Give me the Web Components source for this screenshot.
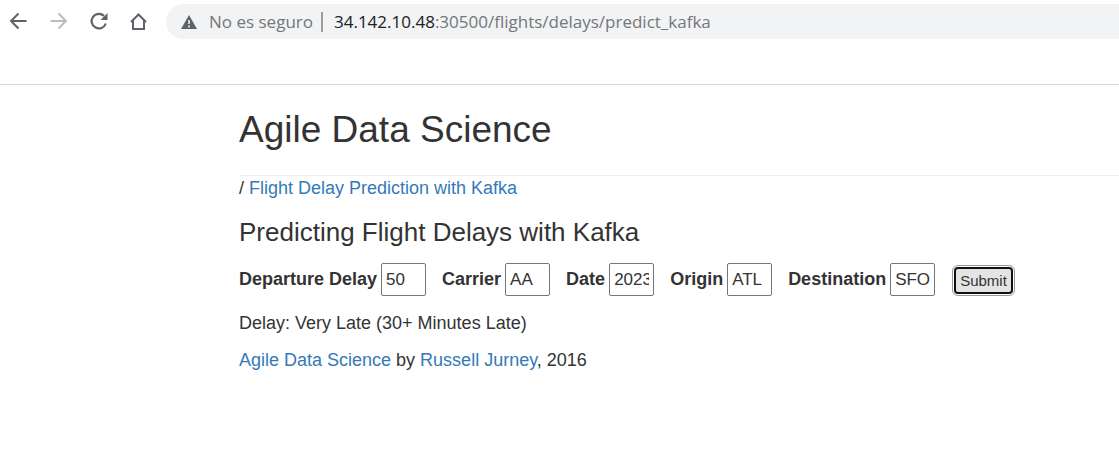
<!DOCTYPE html>
<html lang="en">
<head>
<meta charset="utf-8">
<title>Flight Delay Prediction</title>
<style>
  body { margin: 0; background: #fff; color: #333; font: 18px/25px "Liberation Sans", Arial, sans-serif; }
</style>
</head>
<body>
<browser-bar></browser-bar>
<page-shell>
  <page-title slot="title">Agile Data Science</page-title>
  <flight-form></flight-form>
</page-shell>

<template id="browser-bar">
  <style>
    :host { display: block; height: 84px; border-bottom: 1px solid #d6d7d9; }
    header { display: flex; align-items: center; padding-top: 4px; height: 35px; }
    nav { display: flex; gap: 20px; padding: 0 18px 0 8px; }
    button { display: block; width: 20px; height: 20px; border: 0; padding: 0; background: none; color: #5f6368; }
    button:disabled { color: #babcbe; }
    svg { display: block; }
    .address { flex: 1; display: flex; align-items: center; height: 35px; box-sizing: border-box; padding-left: 15px; border-radius: 18px 0 0 18px; background: #f1f3f4; color: #74777b; font: 17px/24px "Open Sans", "Noto Sans", sans-serif; white-space: nowrap; }
    .secure { padding-left: 12px; }
    .rule { width: 2px; height: 20px; margin: 0 11px 0 8px; background: #9b9ea1; }
    b { font-weight: 400; color: #202124; }
  </style>
  <header>
    <nav>
      <button aria-label="Back"><svg width="20" height="20" viewBox="0 0 20 20" fill="none" stroke="currentColor" stroke-width="2"><path d="M18.500 9H3.500M10.500 1.500L3 9l7.500 7.500"/></svg></button>
      <button aria-label="Forward" disabled><svg width="20" height="20" viewBox="0 0 20 20" fill="none" stroke="currentColor" stroke-width="2"><path d="M2.500 9h15M10.500 1.500L18 9l-7.500 7.500"/></svg></button>
      <button aria-label="Reload"><svg width="20" height="20" viewBox="0 0 20 20"><path d="M17.800 11.500A7.300 7.300 0 1 1 16 3.900" fill="none" stroke="currentColor" stroke-width="2.200"/><path d="M19.500 1v7h-7z" fill="currentColor"/></svg></button>
      <button aria-label="Home"><svg width="20" height="20" viewBox="0 0 20 20" fill="none" stroke="currentColor" stroke-width="2"><path d="M3 10L10.500 2.500L18 10M5 8.500v8.500h11V8.500"/></svg></button>
    </nav>
    <div class="address">
      <svg width="16" height="16" viewBox="0 0 16 16"><path d="M8 1l8 14H0z" fill="#5f6368"/><path d="M8 6v4M8 11.500v2" stroke="#f1f3f4" stroke-width="1.600"/></svg>
      <span class="secure">No es seguro</span><span class="rule"></span><span><b>34.142.10.48</b>:30500/flights/delays/predict_kafka</span>
    </div>
  </header>
</template>

<template id="page-shell">
  <style>
    :host { display: block; }
    main { padding: 22px 0 0 239px; }
    a { color: #337ab7; text-decoration: none; }
    nav { margin: 0; }
    footer { margin-top: 12px; }
  </style>
  <main>
    <slot name="title"></slot>
    <nav>/ <a href="#">Flight Delay Prediction with Kafka</a></nav>
    <slot></slot>
    <footer><a href="#">Agile Data Science</a> by <a href="#">Russell Jurney</a>, 2016</footer>
  </main>
</template>

<template id="page-title">
  <style>
    :host { display: block; border-bottom: 1px solid #eee; padding-bottom: 22px; }
    h1 { margin: 0; font-size: 37px; font-weight: 400; line-height: 46px; }
  </style>
  <h1><slot></slot></h1>
</template>

<template id="labelled-input">
  <style>
    :host { display: flex; align-items: center; gap: 4px; }
    label { font-weight: 700; white-space: nowrap; }
    input { box-sizing: border-box; width: 45px; height: 33px; margin: 0; padding: 1px 4px; border: 1px solid #767676; border-radius: 2px; background: #fff; color: #333; font: inherit; font-size: 17px; }
  </style>
  <label for="field"><slot></slot></label><input id="field" type="text">
</template>

<template id="flight-form">
  <style>
    :host { display: block; }
    h3 { margin: 15px 0; font-size: 26px; font-weight: 400; line-height: 32px; }
    form { display: flex; align-items: center; gap: 16px; }
    button { height: 27px; margin: 2px 0 0 3px; padding: 0 4px; border: 2px solid #101010; border-radius: 4px; outline: 1px solid #999; outline-offset: 1px; background: #e4e4e4; color: #333; font: 15px/20px "Liberation Sans", Arial, sans-serif; }
    p { margin: 15px 0 0; }
  </style>
  <h3>Predicting Flight Delays with Kafka</h3>
  <form>
    <labelled-input value="50">Departure Delay</labelled-input>
    <labelled-input value="AA">Carrier</labelled-input>
    <labelled-input value="2023-12-25">Date</labelled-input>
    <labelled-input value="ATL">Origin</labelled-input>
    <labelled-input value="SFO">Destination</labelled-input>
    <button type="button">Submit</button>
  </form>
  <p>Delay: Very Late (30+ Minutes Late)</p>
</template>

<script>
  class TemplateElement extends HTMLElement {
    constructor() {
      super();
      const template = document.getElementById(this.localName);
      this.attachShadow({ mode: "open" }).append(template.content.cloneNode(true));
    }
  }
  class LabelledInput extends TemplateElement {
    connectedCallback() {
      this.shadowRoot.querySelector("input").value = this.getAttribute("value") || "";
    }
  }
  customElements.define("browser-bar", class extends TemplateElement {});
  customElements.define("page-shell", class extends TemplateElement {});
  customElements.define("page-title", class extends TemplateElement {});
  customElements.define("labelled-input", LabelledInput);
  customElements.define("flight-form", class extends TemplateElement {});
</script>
</body>
</html>
